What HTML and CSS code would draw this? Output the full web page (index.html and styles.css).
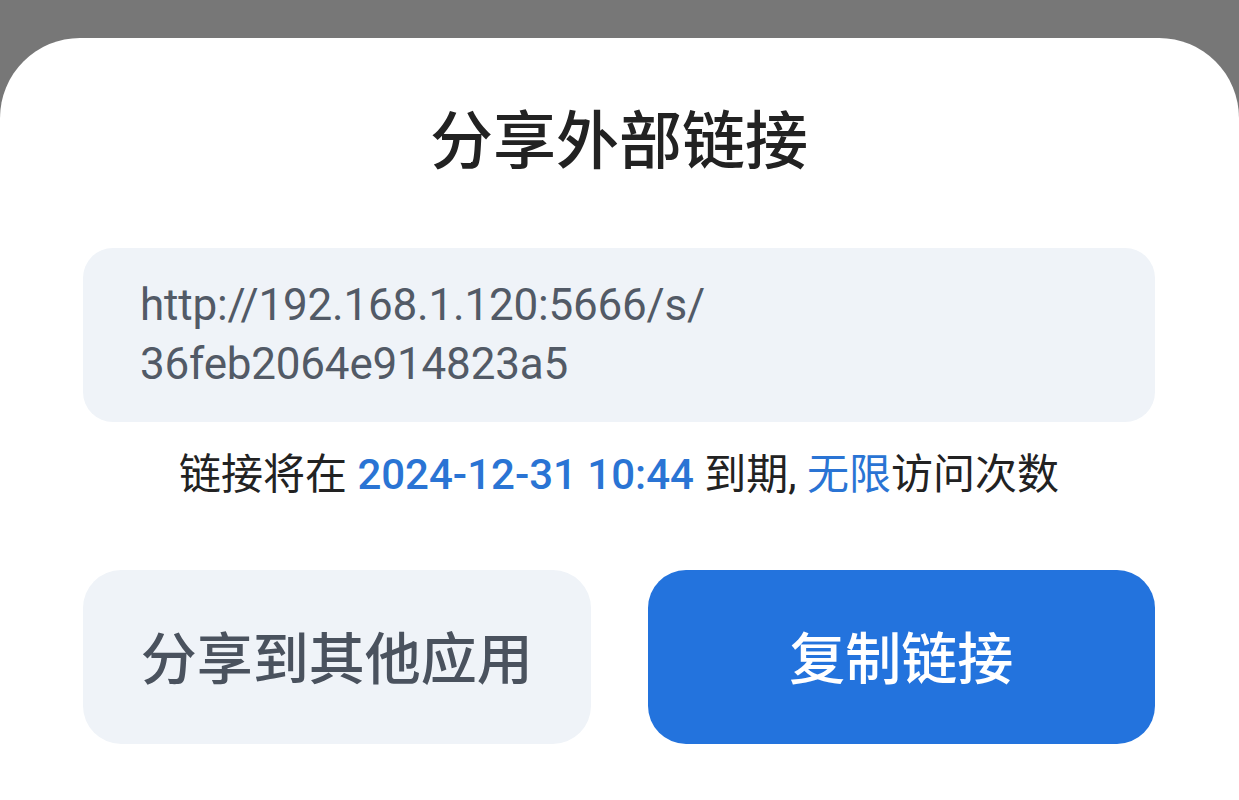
FILE: index.html
```html
<!DOCTYPE html>
<html lang="zh-CN">
<head>
<meta charset="utf-8">
<title>分享外部链接</title>
<link rel="stylesheet" href="styles.css">
</head>
<body>
<div class="sheet">
  <h1 class="title">分享外部链接</h1>
  <div class="link-box">http://192.168.1.120:5666/s/<br>36feb2064e914823a5</div>
  <p class="expiry">链接将在 <span class="hl strong">2024-12-31 10:44</span> 到期, <span class="hl">无限</span>访问次数</p>
  <div class="actions">
    <button class="btn btn-secondary">分享到其他应用</button>
    <button class="btn btn-primary">复制链接</button>
  </div>
</div>
</body>
</html>
```
FILE: styles.css
```css
* { box-sizing: border-box; }
html, body {
  margin: 0;
  padding: 0;
  height: 100%;
}
body {
  background: #777777;
  font-family: Roboto, "Noto Sans CJK SC", sans-serif;
  overflow: hidden;
}
.sheet {
  margin-top: 38px;
  background: #ffffff;
  border-radius: 80px 80px 0 0;
  height: 762px;
  padding: 0 84px 0 83px;
  display: flex;
  flex-direction: column;
}
.title {
  margin: 0;
  padding-top: 66px;
  height: 210px;
  text-align: center;
  font-size: 63px;
  line-height: 76px;
  font-weight: 500;
  color: #222222;
}
.link-box {
  background: #eff3f8;
  border-radius: 30px;
  height: 174px;
  padding: 28px 57px 0;
  font-family: Roboto, sans-serif;
  font-size: 44px;
  line-height: 59px;
  letter-spacing: -0.2px;
  color: #525a66;
}
.expiry {
  margin: 0;
  padding-top: 26px;
  height: 148px;
  text-align: center;
  font-size: 42px;
  line-height: 54px;
  color: #222222;
}
.hl { color: #2a74d4; }
.strong { font-weight: 500; }
.actions {
  display: flex;
  gap: 57px;
}
.btn {
  flex: 1;
  height: 174px;
  border: none;
  border-radius: 38px;
  font-family: "Noto Sans CJK SC", sans-serif;
  font-size: 56px;
  font-weight: 500;
  padding: 0 0 6px;
}
.btn-secondary {
  background: #eff3f8;
  color: #4a525e;
}
.btn-primary {
  background: #2373dd;
  color: #ffffff;
}
```
